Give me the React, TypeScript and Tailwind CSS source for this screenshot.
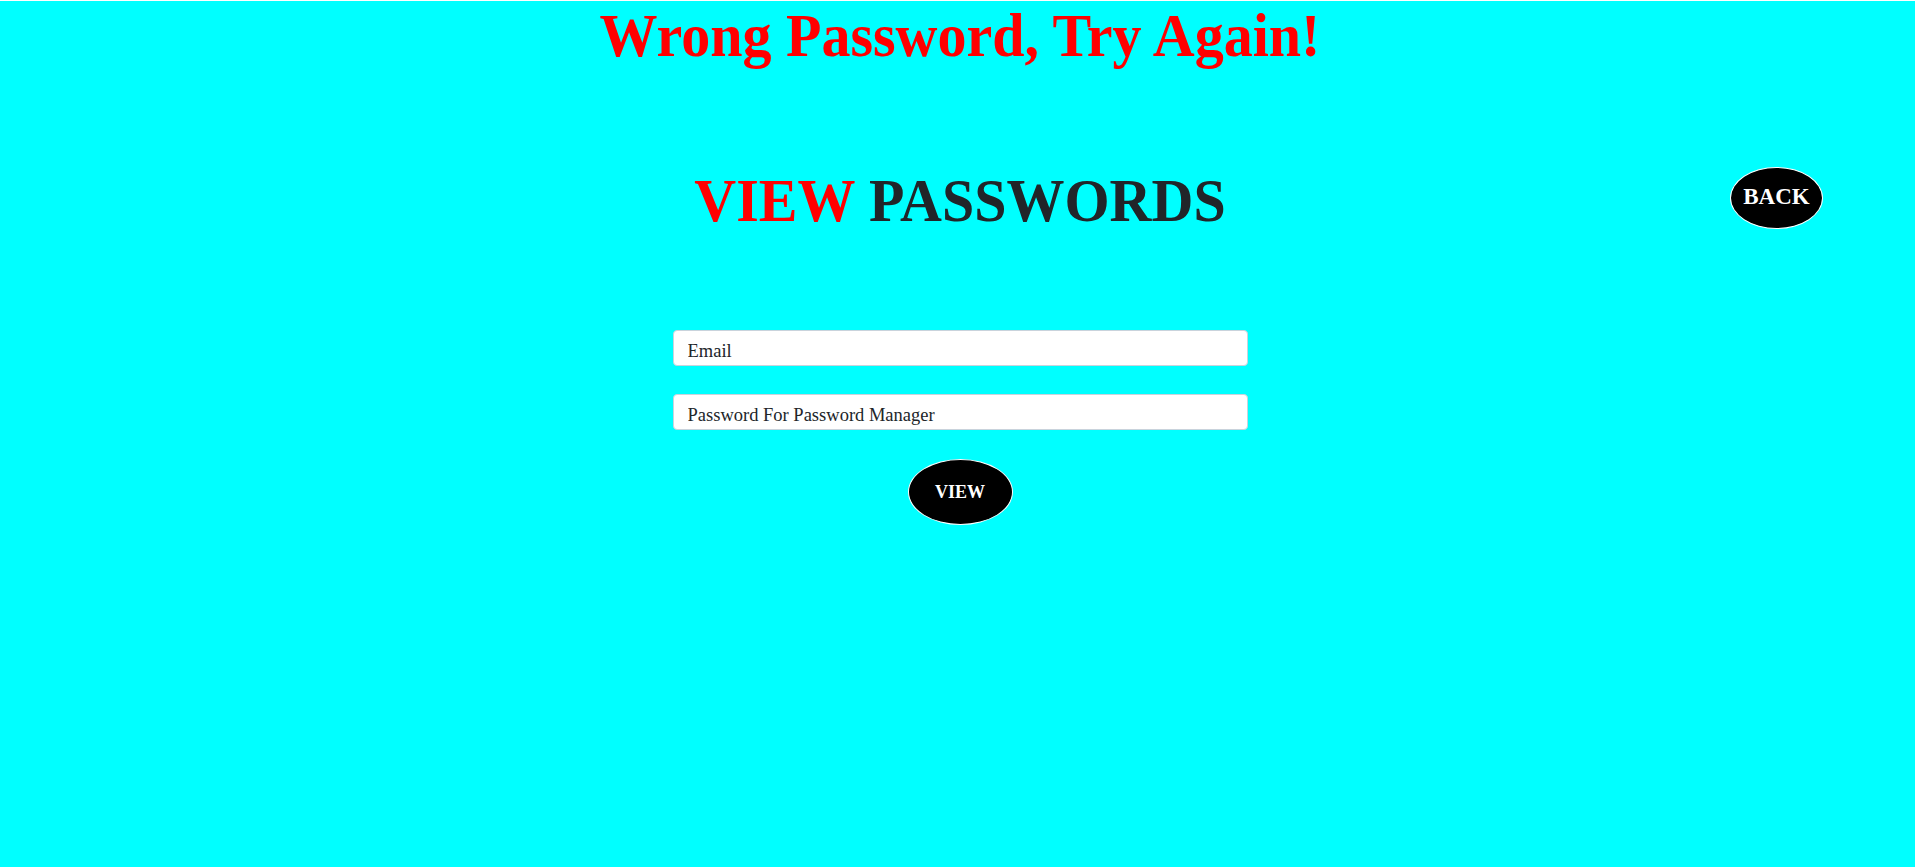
import React from "react";

export default function App() {
  return (
    <div className="min-h-screen bg-[#00ffff] border-t border-white pl-[5px] font-['Liberation_Serif',serif]">
      <h1 className="mt-[3px] text-center text-[58px] leading-[63px] font-bold text-[#ff0000] scale-y-105">
        Wrong Password, Try Again!
      </h1>

      <div className="mt-[102px] grid grid-cols-[1fr_auto_1fr] items-center">
        <div />
        <h2 className="text-[58px] leading-[63px] font-bold scale-y-105">
          <span className="text-[#ff0000]">VIEW</span>{" "}
          <span className="text-[#212529]">PASSWORDS</span>
        </h2>
        <div className="flex justify-end pr-[92px]">
          <button className="-mt-[6px] w-[93px] h-[62px] rounded-[50%] bg-black border border-white text-white text-[23px] font-bold">
            BACK
          </button>
        </div>
      </div>

      <form
        className="mt-[98px] flex flex-col items-center gap-[28px]"
        onSubmit={(e) => e.preventDefault()}
      >
        <input
          type="email"
          placeholder="Email"
          className="w-[575px] h-[36px] pl-[14px] pt-[6px] pb-0 bg-white border border-[#c9d3dc] rounded-[4px] text-[18.5px] text-[#212529] placeholder:text-[#212529] outline-none"
        />
        <input
          type="password"
          placeholder="Password For Password Manager"
          className="w-[575px] h-[36px] pl-[14px] pt-[6px] pb-0 bg-white border border-[#c9d3dc] rounded-[4px] text-[18.5px] text-[#212529] placeholder:text-[#212529] outline-none"
        />
        <button
          type="submit"
          className="mt-[1px] w-[105px] h-[66px] rounded-[50%] bg-black border border-white text-white text-[18px] font-bold"
        >
          VIEW
        </button>
      </form>
    </div>
  );
}
